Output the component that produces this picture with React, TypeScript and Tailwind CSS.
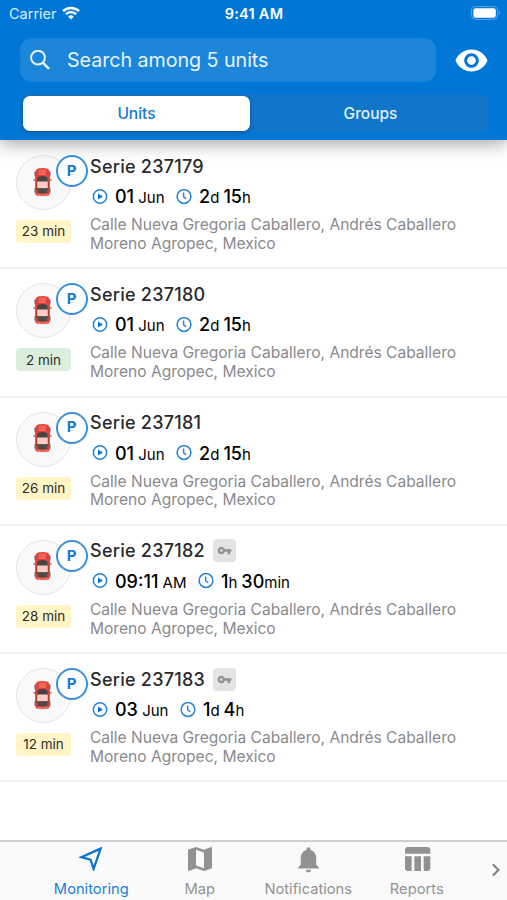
import React from 'react';
import {
  MdMap,
  MdNotifications,
  MdRemoveRedEye,
  MdTableChart,
  MdVpnKey,
} from 'react-icons/md';
import { ChevronRight } from 'lucide-react';

type Part = { value: string; unit: string };

type Unit = {
  name: string;
  updated: string;
  fresh?: boolean;
  hasKey?: boolean;
  start: Part[];
  duration: Part[];
};

const ADDRESS = [
  'Calle Nueva Gregoria Caballero, Andrés Caballero',
  'Moreno Agropec, Mexico',
];

const parked = {
  start: [{ value: '01', unit: ' Jun' }],
  duration: [
    { value: '2', unit: 'd' },
    { value: '15', unit: 'h' },
  ],
};

const units: Unit[] = [
  { name: 'Serie 237179', updated: '23 min', ...parked },
  { name: 'Serie 237180', updated: '2 min', fresh: true, ...parked },
  { name: 'Serie 237181', updated: '26 min', ...parked },
  {
    name: 'Serie 237182',
    updated: '28 min',
    hasKey: true,
    start: [{ value: '09:11', unit: ' AM' }],
    duration: [
      { value: '1', unit: 'h' },
      { value: '30', unit: 'min' },
    ],
  },
  {
    name: 'Serie 237183',
    updated: '12 min',
    hasKey: true,
    start: [{ value: '03', unit: ' Jun' }],
    duration: [
      { value: '1', unit: 'd' },
      { value: '4', unit: 'h' },
    ],
  },
];

const WifiIcon = () => (
  <svg viewBox="0 0 18 14" className="mb-[2px] ml-[5px] h-[14px] w-[18px]" fill="none" stroke="white">
    <path d="M1 5.2a11.4 11.4 0 0 1 16 0" strokeWidth="2.5" />
    <path d="M3.9 8.2a7.3 7.3 0 0 1 10.2 0" strokeWidth="2.3" />
    <path d="M9 13.6L6.2 10.7a4 4 0 0 1 5.6 0z" fill="white" stroke="none" />
  </svg>
);

const BatteryIcon = () => (
  <svg viewBox="0 0 30 14" className="mb-px h-[14px] w-[30px]">
    <rect x="0.6" y="0.6" width="26" height="12.8" rx="4" fill="none" stroke="#5ea6e4" />
    <rect x="2.4" y="2.2" width="22.4" height="9.6" rx="2.2" fill="white" />
    <path d="M28 5v4c1.6-.6 1.6-3.4 0-4z" fill="#5ea6e4" />
  </svg>
);

const SearchIcon = () => (
  <svg viewBox="0 0 20 20" className="h-5 w-5" fill="none" stroke="#e8f3fc">
    <circle cx="8" cy="7.6" r="6.9" strokeWidth="1.9" />
    <path d="M12.8 12.6l6.2 6.2" strokeWidth="2.5" />
  </svg>
);

const CarIcon = () => (
  <svg viewBox="0 0 18 30" preserveAspectRatio="none" className="h-[30px] w-[19px]">
    <path d="M0 13l3.5-2v2.6H.6zM18 13l-3.5-2v2.6h2.9z" fill="#c3352b" />
    <rect x="1.5" y="4.5" width="3" height="5" rx="0.8" fill="#5a4a4a" />
    <rect x="13.5" y="4.5" width="3" height="5" rx="0.8" fill="#5a4a4a" />
    <rect x="1.5" y="21" width="3" height="5" rx="0.8" fill="#5a4a4a" />
    <rect x="13.5" y="21" width="3" height="5" rx="0.8" fill="#5a4a4a" />
    <path
      d="M4.6 1.6Q9 .6 13.4 1.6 15.8 2.4 16 7v18q0 3.4-2.4 3.8-4.6.8-9.2 0Q2 28.4 2 25V7Q2.2 2.4 4.6 1.6z"
      fill="#e0453a"
    />
    <path d="M5.5 3Q9 1.8 12.5 3L12.2 8H5.8z" fill="#f4665a" />
    <path d="M4 12Q4.4 9.2 9 9q4.6.2 5 3L13.2 15H4.8z" fill="#454244" />
    <path d="M3.4 13l1.4 2.5v5.6L3.4 24.5zM14.6 13l-1.4 2.5v5.6l1.4 3.4z" fill="#6b3c3b" />
    <rect x="4" y="14.6" width="10" height="6.6" rx="0.8" fill="#ffcdc4" />
    <path d="M4.6 21.3h8.8l.4 4.2q-4.8 2-9.6 0z" fill="#4c494b" />
    <path d="M4.5 27.6Q9 28.7 13.5 27.6" stroke="#f59a91" fill="none" />
  </svg>
);

const PlayCircleIcon = () => (
  <svg viewBox="0 0 16 16" className="h-4 w-4 shrink-0" fill="none">
    <circle cx="8" cy="7.5" r="6.7" stroke="#2583d6" strokeWidth="1.5" />
    <path d="M6 4.4v6.2L11 7.5z" fill="#1073d0" />
  </svg>
);

const ClockIcon = () => (
  <svg viewBox="0 0 16 16" className="h-4 w-4 shrink-0" fill="none" stroke="#2583d6">
    <circle cx="8" cy="7.5" r="6.9" strokeWidth="1.5" />
    <path d="M7.6 3.5V7.8l2.7 1.9" strokeWidth="1.4" />
  </svg>
);

const MonitoringIcon = () => (
  <svg viewBox="0 0 24 24" className="h-6 w-6" fill="none" stroke="#0b74cd" strokeWidth="2.3">
    <path d="M21.6 1.6L2.2 10.2l9.4 2.4 3 9.2z" />
  </svg>
);

const Parts = ({ parts }: { parts: Part[] }) => (
  <span className="flex items-baseline gap-[4px] text-black">
    {parts.map(({ value, unit }) => (
      <span key={unit} className="whitespace-pre text-[15px]">
        <span className="text-[18px] font-medium">{value}</span>
        {unit}
      </span>
    ))}
  </span>
);

function UnitRow({ unit }: { unit: Unit }) {
  return (
    <div className="flex h-[128.25px] border-b-2 border-[#f1f1f2] pl-4">
      <div className="w-[74px] shrink-0 pt-[14px]">
        <div className="relative flex h-[55px] w-[55px] items-center justify-center rounded-full border border-[#e4e4e4] bg-[#f9f9f9] pb-[2px] pr-[2px]">
          <CarIcon />
          <div className="absolute left-[38.5px] top-[-1px] flex h-8 w-8 items-center justify-center rounded-full border-2 border-[#3a8fda] bg-white text-[15px] font-bold text-[#1478d0]">
            P
          </div>
        </div>
        <div
          className={`mt-[10px] flex h-[23px] w-[55px] items-center justify-center rounded-[4px] text-[13.5px] text-[#2c2b25] ${
            unit.fresh ? 'bg-[#dbeedd]' : 'bg-[#fff5c6]'
          }`}
        >
          {unit.updated}
        </div>
      </div>

      <div className="pt-[13px]">
        <div className="flex h-6 items-center text-[18px] font-medium tracking-[0.25px] text-[#2a2a2c]">
          {unit.name}
          {unit.hasKey && (
            <span className="ml-2 flex h-[23px] w-[23px] items-center justify-center rounded-[4px] bg-[#e4e4e4]">
              <MdVpnKey className="h-[15px] w-[15px] text-[#939393]" />
            </span>
          )}
        </div>
        <div className="mt-[6px] flex h-[25px] items-center pl-[2px]">
          <PlayCircleIcon />
          <span className="ml-[7px] mr-[11.5px]">
            <Parts parts={unit.start} />
          </span>
          <ClockIcon />
          <span className="ml-[7px]">
            <Parts parts={unit.duration} />
          </span>
        </div>
        <div className="mt-[7px] text-[15.55px] leading-[18.75px] text-[#8a8a8d]">
          {ADDRESS.map((line) => (
            <div key={line} className="whitespace-nowrap">
              {line}
            </div>
          ))}
        </div>
      </div>
    </div>
  );
}

const tabs = [
  { label: 'Monitoring', icon: <MonitoringIcon />, active: true },
  { label: 'Map', icon: <MdMap className="h-8 w-8" /> },
  { label: 'Notifications', icon: <MdNotifications className="h-[31px] w-[31px]" /> },
  { label: 'Reports', icon: <MdTableChart className="h-8 w-8" /> },
];

export default function App() {
  return (
    <div className="flex h-[900px] w-[507px] flex-col overflow-hidden bg-white font-['Inter',sans-serif]">
      <header className="relative z-10 h-[140px] shrink-0 bg-[#0077d6] shadow-[0_4px_16px_rgba(0,0,0,0.35)]">
        <div className="grid h-[27px] grid-cols-3 items-center pl-[9px] pr-[6px] text-[14.5px] text-white">
          <div className="flex items-center text-[#d9ecfb]">
            Carrier
            <WifiIcon />
          </div>
          <div className="pr-[2px] text-center font-semibold tracking-[0.25px]">9:41 AM</div>
          <div className="flex justify-end">
            <BatteryIcon />
          </div>
        </div>

        <div className="mt-[11px] flex items-center pl-5">
          <div className="flex h-[44px] w-[416px] items-center rounded-[12px] bg-[#1b86da] pl-[10px] text-[19.7px] text-[#e8f3fc]">
            <SearchIcon />
            <span className="ml-[17px] pt-[2px] tracking-[-0.05px]">Search among 5 units</span>
          </div>
          <MdRemoveRedEye className="ml-[18px] h-[35px] w-[35px] text-white" />
        </div>

        <div className="mx-[21px] mt-[12px] flex h-[39px] w-[467px] rounded-[8px] bg-[#1076ca] p-[2px] text-[15.5px] font-medium">
          <div className="flex h-[35px] w-[227px] items-center justify-center rounded-[7px] bg-white text-[#1479d1] shadow-[0_1px_4px_rgba(0,0,0,0.3)]">
            Units
          </div>
          <div className="flex h-[35px] flex-1 items-center justify-center pl-[5px] text-[#e2f0fb]">
            Groups
          </div>
        </div>
      </header>

      <main className="flex-1 pt-px">
        {units.map((unit) => (
          <UnitRow key={unit.name} unit={unit} />
        ))}
      </main>

      <nav className="flex h-[60px] shrink-0 border-t-2 border-[#cfcfd1] bg-[#fafafa] pl-[37px]">
        {tabs.map(({ label, icon, active }) => (
          <div
            key={label}
            className={`flex w-[108.5px] shrink-0 flex-col items-center text-[14.7px] ${
              active ? 'text-[#1c80d3]' : 'text-[#929294]'
            }`}
          >
            <div className="flex h-[34px] shrink-0 items-center">{icon}</div>
            <span className="mt-px leading-[24px]">{label}</span>
          </div>
        ))}
        <ChevronRight
          className="ml-[15px] mt-[18px] h-5 w-5 shrink-0 text-[#7e7e80]"
          strokeWidth={2.5}
        />
      </nav>
    </div>
  );
}
